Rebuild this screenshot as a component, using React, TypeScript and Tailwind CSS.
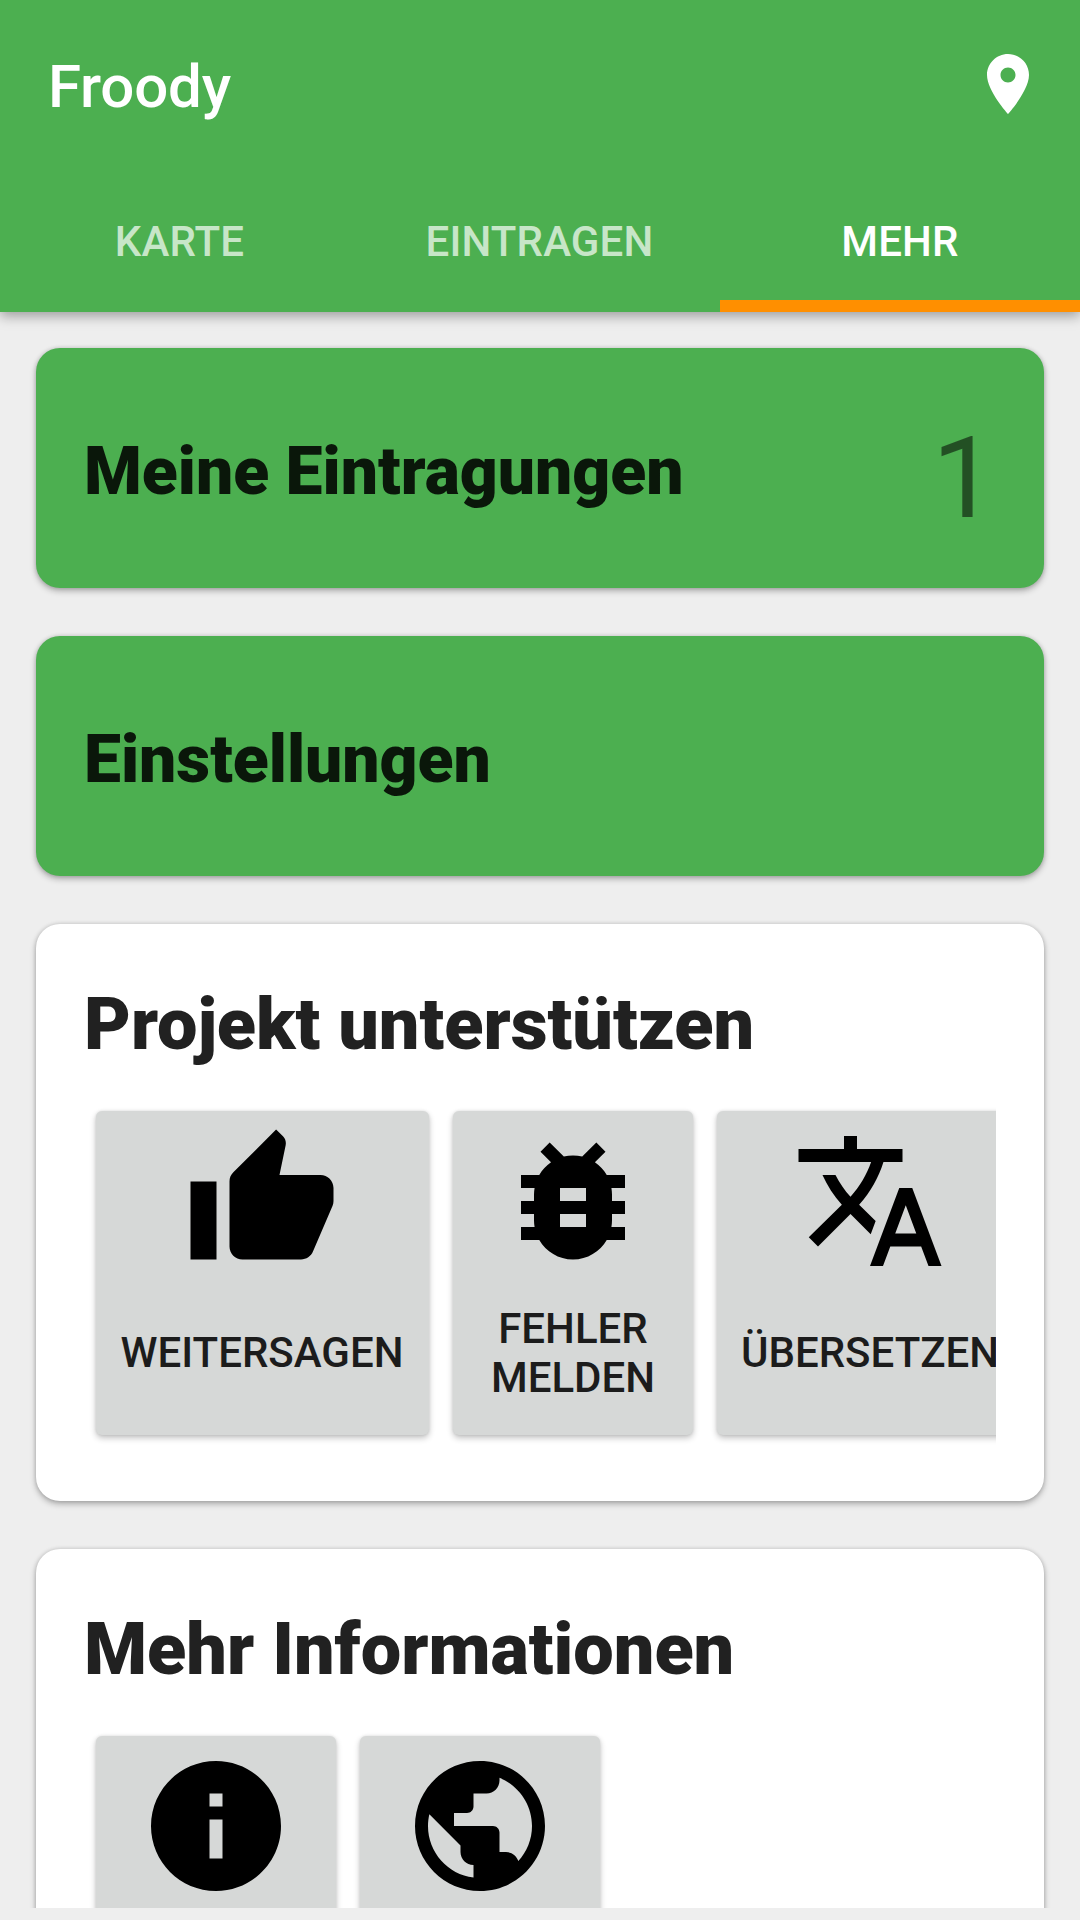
import React from "react";

function Icon({ d, size = 156, className = "" }: { d: string; size?: number; className?: string }) {
  return (
    <svg viewBox="0 0 24 24" width={size} height={size} fill="currentColor" className={"shrink-0 " + className}>
      <path d={d} />
    </svg>
  );
}

const icons = {
  pin: "M12 2C8.13 2 5 5.13 5 9c0 5.25 7 13 7 13s7-7.75 7-13c0-3.87-3.13-7-7-7zm0 9.5c-1.38 0-2.5-1.12-2.5-2.5s1.12-2.5 2.5-2.5 2.5 1.12 2.5 2.5-1.12 2.5-2.5 2.5z",
  thumb: "M1 21h4V9H1v12zm22-11c0-1.1-.9-2-2-2h-6.31l.95-4.57.03-.32c0-.41-.17-.79-.44-1.06L14.17 1 7.59 7.59C7.22 7.95 7 8.45 7 9v10c0 1.1.9 2 2 2h9c.83 0 1.54-.5 1.84-1.22l3.02-7.05c.09-.23.14-.47.14-.73V10z",
  bug: "M20 8h-2.81c-.45-.78-1.07-1.45-1.82-1.96L17 4.41 15.59 3l-2.17 2.17C12.96 5.06 12.49 5 12 5c-.49 0-.96.06-1.41.17L8.41 3 7 4.41l1.62 1.63C7.88 6.55 7.26 7.22 6.81 8H4v2h2.09c-.05.33-.09.66-.09 1v1H4v2h2v1c0 .34.04.67.09 1H4v2h2.81c1.04 1.79 2.97 3 5.19 3s4.15-1.21 5.19-3H20v-2h-2.09c.05-.33.09-.66.09-1v-1h2v-2h-2v-1c0-.34-.04-.67-.09-1H20V8zm-6 8h-4v-2h4v2zm0-4h-4v-2h4v2z",
  translate: "M12.87 15.07l-2.54-2.51.03-.03c1.74-1.94 2.98-4.17 3.71-6.53H17V4h-7V2H8v2H1v1.99h11.17C11.5 7.92 10.44 9.75 9 11.35 8.07 10.32 7.3 9.19 6.69 8h-2c.73 1.63 1.73 3.17 2.98 4.56l-5.09 5.02L4 19l5-5 3.11 3.11.76-2.04zM18.5 10h-2L12 22h2l1.12-3h4.75L21 22h2l-4.5-12zm-2.62 7l1.62-4.33L19.12 17h-3.24z",
  info: "M12 2C6.48 2 2 6.48 2 12s4.48 10 10 10 10-4.48 10-10S17.52 2 12 2zm1 15h-2v-6h2v6zm0-8h-2V7h2v2z",
  globe: "M12 2C6.48 2 2 6.48 2 12s4.48 10 10 10 10-4.48 10-10S17.52 2 12 2zm-1 17.93c-3.95-.49-7-3.85-7-7.93 0-.62.08-1.21.21-1.79L9 15v1c0 1.1.9 2 2 2v1.93zm6.9-2.54c-.26-.81-1-1.39-1.9-1.39h-1v-3c0-.55-.45-1-1-1H8v-2h2c.55 0 1-.45 1-1V7h2c1.1 0 2-.9 2-2v-.41c2.93 1.19 5 4.06 5 7.41 0 2.08-.8 3.97-2.1 5.39z",
};

const cardShadow = "shadow-[0_3px_6px_rgba(0,0,0,0.28),0_0_4px_rgba(0,0,0,0.14)]";

function Tile({ icon, label, className }: { icon: string; label?: React.ReactNode; className: string }) {
  return (
    <div className={"flex h-[324px] shrink-0 flex-col items-center rounded-[6px] bg-[#d6d8d7] pt-[12px] shadow-[0_3px_6px_rgba(0,0,0,0.24),0_0_3px_rgba(0,0,0,0.1)] " + className}>
      <Icon d={icon} className="text-black" />
      <div className="flex h-[147px] items-center whitespace-nowrap text-center text-[42px] font-medium leading-[49px] text-[#1c1c1c]">
        <span>{label}</span>
      </div>
    </div>
  );
}

export default function App() {
  return (
    <div className="flex h-[1920px] w-[1080px] flex-col overflow-hidden bg-[#eeeeee] font-[Roboto,sans-serif]">
      <header className="relative z-10 flex h-[312px] shrink-0 flex-col bg-[#4caf50] shadow-[0_4px_12px_rgba(0,0,0,0.35)]">
        <div className="flex h-[168px] items-center justify-between pl-[48px] pr-[36px]">
          <h1 className="pt-[6px] text-[60px] font-medium leading-[70px] tracking-[-0.2px] text-white">Froody</h1>
          <Icon d={icons.pin} size={72} className="text-white" />
        </div>
        <nav className="grid h-[144px] grid-cols-3 text-center text-[42px] font-medium leading-[49px] tracking-[0.15px]">
          <div className="pt-[49px] pr-px text-white/70">KARTE</div>
          <div className="pt-[49px] pr-px text-white/70">EINTRAGEN</div>
          <div className="border-b-[12px] border-[#ff8f00] pt-[49px] text-white">MEHR</div>
        </nav>
      </header>
      <main className="flex h-[1596px] shrink-0 flex-col gap-[48px] overflow-hidden px-[36px] pt-[36px]">
        <section className={"flex h-[240px] shrink-0 items-center justify-between rounded-[24px] bg-[#4caf50] pl-[48px] pr-[48px] " + cardShadow}>
          <h2 className="pt-[6px] text-[66px] font-black text-black/87">Meine Eintragungen</h2>
          <span className="pt-[20px] text-[114px] leading-[130px] text-black/54">1</span>
        </section>
        <section className={"flex h-[240px] shrink-0 items-center rounded-[24px] bg-[#4caf50] pl-[48px] " + cardShadow}>
          <h2 className="pt-[6px] text-[66px] font-black text-black/87">Einstellungen</h2>
        </section>
        <section className={"h-[577px] shrink-0 rounded-[24px] bg-white px-[48px] pt-[59px] " + cardShadow}>
          <h2 className="h-[84px] text-[72px] font-black leading-[84px] text-[#212121]">Projekt unterstützen</h2>
          <div className="mt-[32px] flex h-[348px] gap-[24px] overflow-hidden pl-[12px] pt-[12px]">
            <Tile icon={icons.thumb} label="WEITERSAGEN" className="w-[333px] pr-px" />
            <Tile icon={icons.bug} label={<>FEHLER<br />MELDEN</>} className="w-[240px]" />
            <Tile icon={icons.translate} label="ÜBERSETZEN" className="w-[306px]" />
          </div>
        </section>
        <section className={"h-[577px] shrink-0 rounded-[24px] bg-white px-[48px] pt-[59px] " + cardShadow}>
          <h2 className="h-[84px] text-[72px] font-black leading-[84px] text-[#212121]">Mehr Informationen</h2>
          <div className="mt-[32px] flex h-[348px] gap-[24px] overflow-hidden pl-[12px] pt-[12px]">
            <Tile icon={icons.info} className="w-[240px]" />
            <Tile icon={icons.globe} className="w-[240px]" />
          </div>
        </section>
      </main>
    </div>
  );
}
